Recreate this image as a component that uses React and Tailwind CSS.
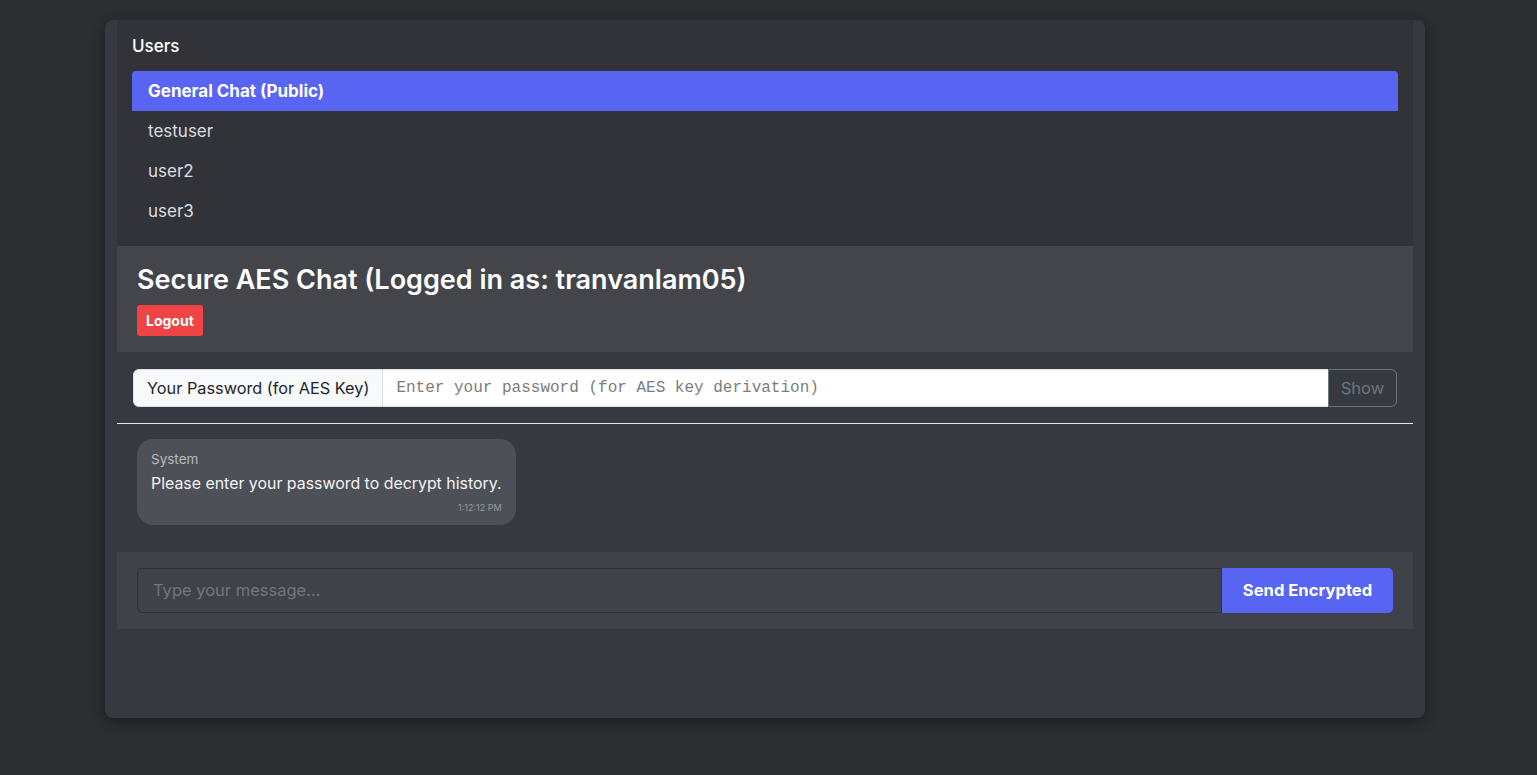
import React, { useState } from 'react';

const users = ['General Chat (Public)', 'testuser', 'user2', 'user3'];

function UserList() {
  const [active, setActive] = useState(0);
  return (
    <div className="bg-[#313338] px-[15px] pt-[14px] pb-[15px]">
      <h3 className="mb-[13px] text-[17px] leading-6 font-medium text-white">Users</h3>
      <ul>
        {users.map((u, i) => (
          <li
            key={u}
            onClick={() => setActive(i)}
            className={
              i === active
                ? 'flex h-10 items-center rounded-t-[4px] bg-[#5865f2] px-4 pt-[2px] text-[17px] font-bold text-white'
                : 'flex h-10 items-center px-4 pt-[2px] text-[17px] text-[#dcdde1]'
            }
          >
            {u}
          </li>
        ))}
      </ul>
    </div>
  );
}

function ChatHeader() {
  return (
    <div className="bg-[#43454b] px-5 pt-[18px] pb-4">
      <h2 className="text-[27px] leading-8 font-semibold text-white">
        Secure AES Chat (Logged in as: tranvanlam05)
      </h2>
      <button className="mt-[9px] h-[31px] rounded-[3px] bg-[#ef4444] px-[9px] text-[14px] font-bold text-white">
        Logout
      </button>
    </div>
  );
}

function PasswordRow() {
  return (
    <div className="px-4 pt-[17px] pb-4">
      <div className="flex h-[38px]">
        <span className="flex items-center rounded-l-[6px] border border-[#dee2e6] bg-[#f8f9fa] px-[13px] text-[16.3px] text-[#212529]">
          Your Password (for AES Key)
        </span>
        <input
          type="password"
          placeholder="Enter your password (for AES key derivation)"
          className="min-w-0 flex-1 border-y border-[#dee2e6] bg-white px-[13px] font-['Liberation_Mono',monospace] text-[16px] text-[#212529] outline-none placeholder:text-[#7a7c80]"
        />
        <button className="w-[69px] rounded-r-[6px] border border-[#6c757d] text-[16.5px] text-[#6c757d]">
          Show
        </button>
      </div>
    </div>
  );
}

function Messages() {
  return (
    <div className="border-t border-[#e6e6e6] pt-[15px] pb-[27px] pl-5">
      <div className="inline-block rounded-2xl bg-[#4e5058] px-[14px] pt-[10px] pb-[11px]">
        <div className="text-[13.5px] leading-5 text-[#b5bac1]">System</div>
        <div className="mt-[3px] text-[15.9px] leading-6 text-[#f2f3f5]">
          Please enter your password to decrypt history.
        </div>
        <div className="mt-[6px] text-right text-[9px] leading-3 text-[#949ba4]">1:12:12 PM</div>
      </div>
    </div>
  );
}

function Composer() {
  const [text, setText] = useState('');
  return (
    <div className="bg-[#404249] px-5 py-4">
      <div className="flex h-[45px]">
        <input
          value={text}
          onChange={(e) => setText(e.target.value)}
          placeholder="Type your message..."
          className="min-w-0 flex-1 rounded-l-[5px] border border-[#2f3136] bg-[#404249] px-[15px] text-[16.5px] text-white outline-none placeholder:text-[#72767d]"
        />
        <button className="w-[171px] rounded-r-[5px] bg-[#5865f2] text-[16.6px] font-bold text-white">
          Send Encrypted
        </button>
      </div>
    </div>
  );
}

export default function App() {
  return (
    <div className="min-h-screen bg-[#2b2d31] pt-5 pl-[105px] font-['Inter',sans-serif]">
      <div className="h-[698px] w-[1320px] rounded-lg bg-[#373940] px-3 shadow-[0_4px_12px_rgba(0,0,0,0.35)]">
        <UserList />
        <ChatHeader />
        <PasswordRow />
        <Messages />
        <Composer />
      </div>
    </div>
  );
}
